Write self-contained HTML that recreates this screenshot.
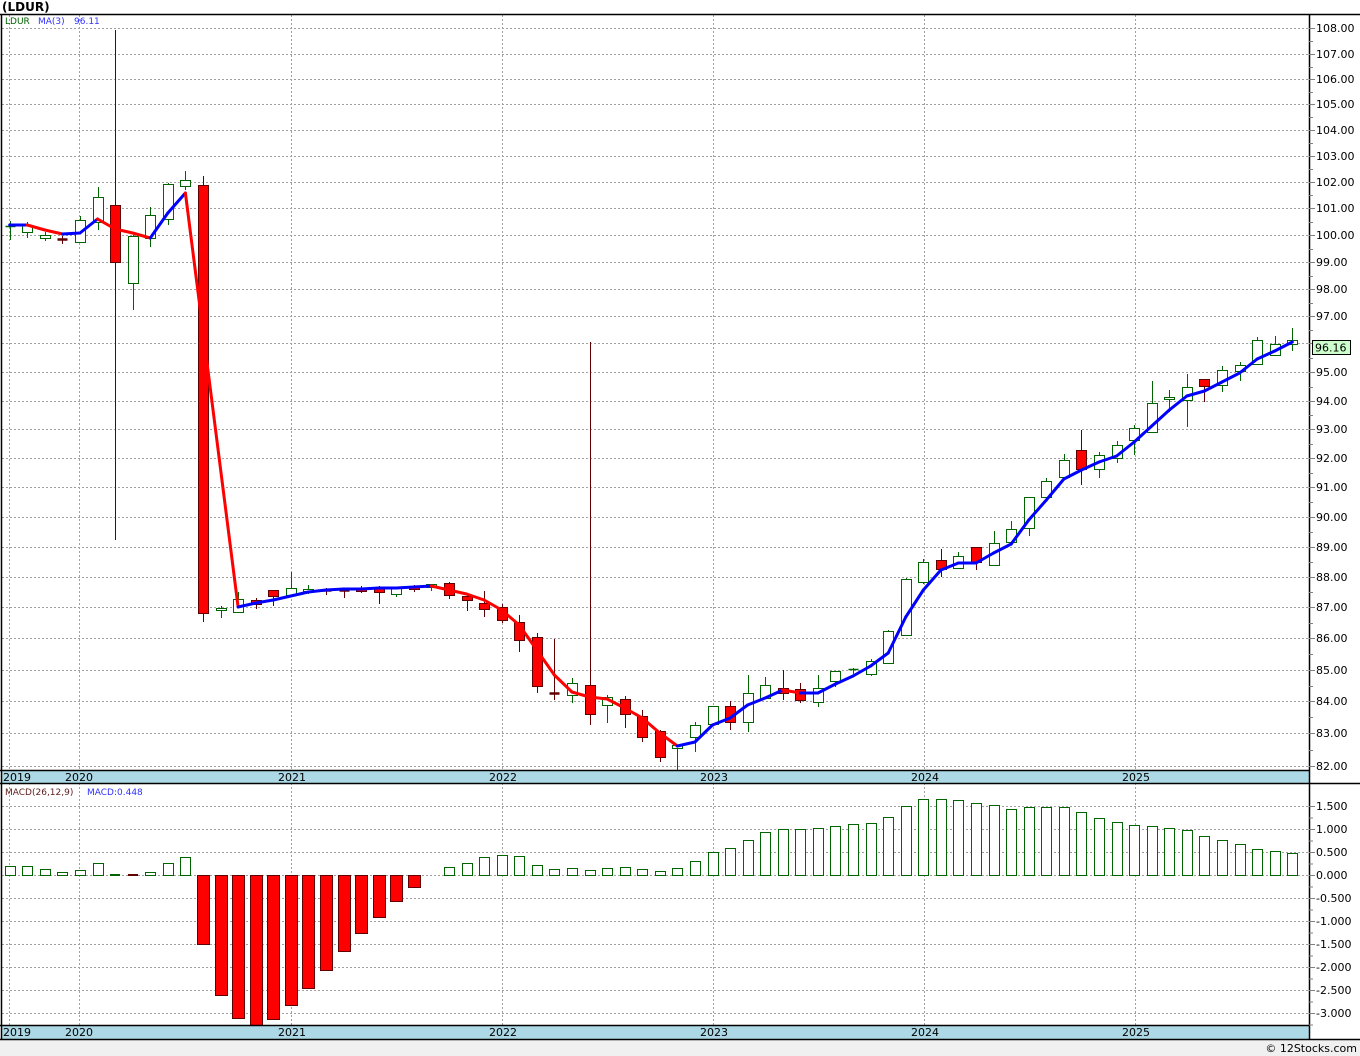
<!DOCTYPE html>
<html><head><meta charset="utf-8"><style>
html,body{margin:0;padding:0;background:#fff;}
body{width:1360px;height:1056px;overflow:hidden;position:relative;font-family:"DejaVu Sans","Liberation Sans",sans-serif;}
svg{position:absolute;left:0;top:0;}
</style></head><body>
<svg id="s" width="1360" height="1056" xmlns="http://www.w3.org/2000/svg" font-family="DejaVu Sans, Liberation Sans, sans-serif">
<rect x="0" y="1040" width="1360" height="16" fill="#f0f0f0"/>
<text x="2" y="11" font-size="12" font-weight="bold" fill="#000">(LDUR)</text>
<g id="grid" stroke="#a0a0a0" stroke-dasharray="2,2" stroke-width="1"></g>
<rect x="2" y="771" width="1307" height="12" fill="#add8e6"/>
<rect x="2" y="1026" width="1307" height="13" fill="#add8e6"/>
<g id="bars"></g>
<g id="cand"></g>
<g id="ma" fill="none" stroke-width="3" stroke-linecap="round" stroke-linejoin="round"></g>
<g stroke="#000" stroke-width="1.5" fill="none">
<line x1="0" y1="14.5" x2="1360" y2="14.5"/>
<line x1="1.5" y1="14" x2="1.5" y2="1040"/>
<line x1="1309.5" y1="14" x2="1309.5" y2="1040"/>
<line x1="0" y1="770.5" x2="1310" y2="770.5"/>
<line x1="0" y1="783.5" x2="1360" y2="783.5"/>
<line x1="0" y1="1025.5" x2="1310" y2="1025.5"/>
<line x1="0" y1="1039.5" x2="1360" y2="1039.5"/>
</g>
<g id="ticks" stroke="#808080" stroke-width="1"></g>
<g font-size="11" fill="#000">
<text x="3" y="781">2019</text><text x="65" y="781">2020</text><text x="278" y="781">2021</text><text x="489" y="781">2022</text><text x="700" y="781">2023</text><text x="911" y="781">2024</text><text x="1122" y="781">2025</text>
<text x="3" y="1036">2019</text><text x="65" y="1036">2020</text><text x="278" y="1036">2021</text><text x="489" y="1036">2022</text><text x="700" y="1036">2023</text><text x="911" y="1036">2024</text><text x="1122" y="1036">2025</text>
</g>
<g font-size="9">
<text x="5" y="24" fill="#006400">LDUR</text><text x="38" y="24" fill="#3030ff">MA(3)</text><text x="74" y="24" fill="#3030ff">96.11</text>
<text x="5" y="795" fill="#602020">MACD(26,12,9)</text><text x="87" y="795" fill="#3030ff">MACD:0.448</text>
</g>
<g id="lbl" font-size="11" fill="#000"></g>
<rect x="1312.5" y="340.5" width="38" height="14" fill="#ccffcc" stroke="#000"/>
<text x="1315" y="351.5" font-size="11" fill="#000">96.16</text>
<text x="1357" y="1052" font-size="11" fill="#000" text-anchor="end">© 12Stocks.com</text>
</svg>
<script>
var NS="http://www.w3.org/2000/svg";
function el(p,t,a){var e=document.createElementNS(NS,t);for(var k in a)e.setAttribute(k,a[k]);document.getElementById(p).appendChild(e);return e;}
var pl=[[108,28],[107,54],[106,79],[105,104],[104,130],[103,156],[102,182],[101,208],[100,235],[99,262],[98,289],[97,316],[96,343],[95,372],[94,401],[93,429],[92,458],[91,487],[90,517],[89,547],[88,577],[87,607],[86,638],[85,670],[84,701],[83,733],[82,766]];
pl.forEach(function(p){el("grid","line",{x1:2,x2:1309,y1:p[1]+.5,y2:p[1]+.5});el("ticks","line",{x1:1309,x2:1315,y1:p[1]+.5,y2:p[1]+.5});
 if(p[0]!=96)el("lbl","text",{x:1316,y:p[1]+4}).textContent=p[0].toFixed(2);});
for(var i=0;i<27;i++){var y=pl[i][1];if(i<26){var m=Math.round((y+pl[i+1][1])/2)+.5;el("ticks","line",{x1:1309,x2:1313,y1:m,y2:m});}}
var ml=[[1.5,806],[1,829],[0.5,852],[0,875],[-0.5,898],[-1,921],[-1.5,944],[-2,967],[-2.5,990],[-3,1013]];
ml.forEach(function(p){el("grid","line",{x1:2,x2:1309,y1:p[1]+.5,y2:p[1]+.5});el("ticks","line",{x1:1309,x2:1315,y1:p[1]+.5,y2:p[1]+.5});el("ticks","line",{x1:1309,x2:1313,y1:p[1]+12,y2:p[1]+12});
 el("lbl","text",{x:1316,y:p[1]+4}).textContent=(p[0]<0?"-":" ")+Math.abs(p[0]).toFixed(3);});
[9,79,291,502,713,924,1135].forEach(function(x){el("grid","line",{x1:x+.5,x2:x+.5,y1:15,y2:1025});});
var C=[[226,226,221,240,1],[225,232,222,238,1],[235,238,232,241,1],[239,239,236,244,0],[220,242,216,242,1],[197,222,187,230,1],[205,262,30,540,0],[236,283,235,310,1],[215,238,207,247,1],[184,219,183,225,1],[180,186,171,190,1],[185,613,176,622,0],[608,610,606,618,1],[599,612,592,613,1],[600,604,598,609,0],[590,596,590,606,0],[588,595,572,597,1],[589,591,585,594,1],[590,590,588,595,0],[590,590,589,598,0],[589,591,586,593,0],[587,592,586,604,0],[588,594,587,597,1],[586,589,585,592,0],[584,587,584,591,1],[583,595,582,599,0],[596,600,593,611,0],[603,609,591,617,0],[607,620,604,623,0],[622,640,615,652,0],[637,686,633,693,0],[693,694,639,700,0],[683,695,678,703,1],[685,714,342,725,0],[697,705,695,723,1],[699,714,696,728,0],[716,737,710,742,0],[731,757,730,762,0],[745,748,745,770,1],[725,737,722,752,1],[706,724,706,725,1],[706,722,701,730,0],[693,722,675,732,1],[685,698,677,698,1],[688,693,670,700,0],[689,700,683,703,0],[688,702,675,707,1],[671,681,671,687,1],[669,670,668,674,1],[661,674,659,676,1],[631,663,630,663,1],[579,635,578,635,1],[562,582,559,584,1],[560,569,549,577,0],[556,568,552,568,1],[547,562,547,570,0],[543,565,531,565,1],[529,542,521,542,1],[497,528,497,536,1],[481,497,478,497,1],[460,477,454,477,1],[450,469,430,485,0],[455,469,452,478,1],[445,458,441,463,1],[428,440,425,455,1],[403,432,381,432,1],[397,399,390,412,1],[387,400,374,427,1],[379,386,379,402,0],[370,385,366,392,1],[365,371,362,381,1],[340,364,337,364,1],[344,355,336,355,1],[340,344,328,351,1]];
function X(i){return 9.7+i*17.57;}
C.forEach(function(c,i){var x=Math.round(X(i))+.5;var up=c[4];var col=up?"#006400":"#600000";
 el("cand","line",{x1:x,x2:x,y1:c[2],y2:c[3],stroke:col,"stroke-width":1});
 var h=c[1]-c[0];
 if(h<2){el("cand","line",{x1:x-5,x2:x+5,y1:c[0]+.5,y2:c[0]+.5,stroke:col,"stroke-width":up?1.5:2.5});}
 else el("cand","rect",{x:x-5,y:c[0]+.5,width:10,height:h,fill:up?"#fff":"#ff0000",stroke:col,"stroke-width":1});});
var M=[225,225,230,234,233,219,229,233,238,213,193,null,null,607,603,600,596,592,590,589,589,588,588,587,586,590,594,600,610,625,650,675,692,697,699,708,718,733,746,742,725,718,705,698,690,693,693,684,676,666,653,617,590,570,563,563,553,544,520,500,479,470,462,456,442,426,410,396,391,382,373,359,351,342];
var pts=[];M.forEach(function(y,i){if(y!=null)pts.push([X(i),y]);});
for(var j=1;j<pts.length;j++){var a=pts[j-1],b=pts[j];el("ma","line",{x1:a[0],y1:a[1],x2:b[0],y2:b[1],stroke:b[1]<=a[1]?"#0000ff":"#ff0000"});}
var B=[866,866,869,872,870,863,874,876,872,863,857,944,995,1018,1025,1019,1005,988,970,951,933,917,901,887,875,867,863,857,855,856,865,869,868,870,868,867,869,871,868,861,852,848,840,832,829,829,828,826,824,823,817,806,799,799,800,803,805,809,807,807,807,812,818,822,825,826,828,830,836,840,844,849,851,853];
B.forEach(function(y,i){var x=Math.round(X(i));
 if(i==6||i==7){el("bars","line",{x1:x-5,x2:x+5,y1:875,y2:875,stroke:i==6?"#006400":"#600000","stroke-width":2});return;}
 if(i==24)return;
 if(y<875)el("bars","rect",{x:x-5+.5,y:y+.5,width:10,height:875-y,fill:"#fff",stroke:"#006400"});
 else el("bars","rect",{x:x-6+.5,y:875.5,width:12,height:y-875,fill:"#ff0000",stroke:"#600000"});});
</script>
</body></html>
